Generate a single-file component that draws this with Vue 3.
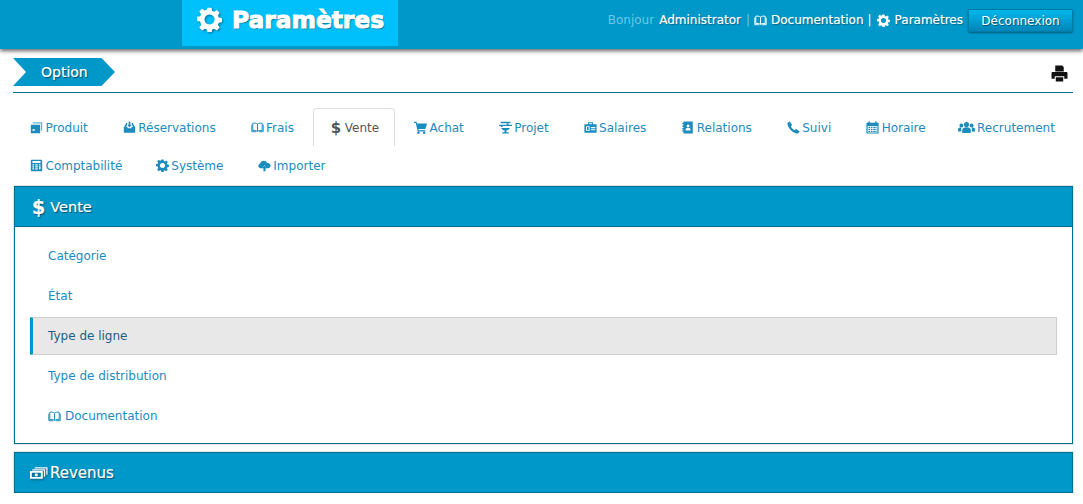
<script setup>
const paths = {
  box: '<path d="M4 1.500h11v9.500l-1.500 1.500V3H3z" opacity=".7"/><path d="M1 4.500h11.500V15H1zM3 10v2h3v-2z" fill-rule="evenodd"/>',
  resa: '<path fill-rule="evenodd" d="M4 2.500 1 8v6.500h14V8l-3-5.500H10.500L12 7.500h-1.500V9h-5V7.500H4L5.500 2.500zM7 .5h2v4h1.700L8 8 5.300 4.500H7z"/>',
  book: '<path fill="none" stroke="currentColor" stroke-width="1.200" d="M8 3.800C6.500 2.600 4 2.300 2.200 2.800v9c1.800-.5 4.300-.2 5.800 1 1.500-1.200 4-1.500 5.800-1v-9c-1.800-.5-4.300-.2-5.800 1zm0 0v9M1 4.500v8.700h5.500M15 4.500v8.700h-5.500"/>',
  cart: '<path d="M0 1h3.200l.5 2H16l-2 6.800H5.300l.4 1.500H14v1.500H4.500L2.200 2.500H0z"/><circle cx="5.500" cy="14.500" r="1.500"/><circle cx="12.500" cy="14.500" r="1.500"/>',
  projet: '<path d="M2 1h12v1.700H2zM0 4.500h9.500V3h2.200v1.500H16V6H4.500v1.500H2.300V6H0zM2.500 8.500h11L11 11.500H9.200v2.300H12V15.500H4v-1.700h2.800v-2.300H5z"/>',
  salary: '<path fill-rule="evenodd" d="M5 1.500h6V4h4.500v10.500H.5V4H5zm1.200 1.200V4h3.600V2.700zM2.500 6.500V12h4.500V6.500zm6 1V9H14V7.500zm0 2.500v1.500H14V10z"/><path d="M3.700 7.500h2v3.500h-2z"/>',
  contact: '<path fill-rule="evenodd" d="M3 .5h11.500v15H3zM1.500 2.500H3V4H1.500zm0 3H3v1.500H1.500zm0 3H3V10H1.500zm0 3H3V13H1.500zM8.700 4.300a1.800 1.800 0 1 0 .01 0zM5.700 11.800h6V10c0-1-1-1.500-3-1.500s-3 .5-3 1.500z"/>',
  phone: '<path d="M3.500.8 6 4.300c.3.400.2.800-.1 1.100L4.700 6.600c.8 1.900 2.600 3.800 4.700 4.700l1.200-1.200c.3-.3.700-.4 1.100-.1l3.500 2.500c.3.300.3.700.1 1l-1.600 1.500c-.5.500-1.200.6-2 .4C6.800 14.200 1.800 9.200.6 4.300c-.2-.8-.1-1.500.4-2L2.500.8c.3-.3.700-.3 1 0z"/>',
  cal: '<path fill-rule="evenodd" d="M3 .5h2V2h6V.5h2V2h2.500v13.500H.5V2H3zM2 6v8h12V6z"/><path d="M3 7h2v1.500H3zm3 0h2v1.500H6zm3 0h2v1.500H9zm2.500 0h1.500v1.500h-1.500zM3 9.500h2V11H3zm3 0h2V11H6zm3 0h2V11H9zm2.500 0h1.500V11h-1.500zM3 12h2v1.500H3zm3 0h2v1.500H6zm3 0h2v1.500H9zm2.500 0h1.500v1.500h-1.500z"/>',
  users: '<circle cx="10" cy="3.800" r="3"/><path d="M5 14v-3.500C5 8 7 7 10 7s5 1 5 3.500V14z"/><circle cx="4" cy="5" r="2.300"/><circle cx="16" cy="5" r="2.300"/><path d="M0 12v-2.500C0 8 1.500 7.300 3.500 7.300L4 12zM20 12v-2.500c0-1.500-1.500-2.200-3.500-2.200L16 12z"/>',
  calc: '<path fill-rule="evenodd" d="M2 1h12c.6 0 1 .4 1 1v12c0 .6-.4 1-1 1H2c-.6 0-1-.4-1-1V2c0-.6.400-1 1-1zm1 1.500V5h10V2.500zM3 6.500V8h2V6.500zm3.500 0V8h3V6.500zm4.500 0V8h2V6.500zM3 9v1.500h2V9zm3.500 0v1.500h3V9zM11 9v3.500h2V9zM3 11.500V13h2v-1.500zm3.500 0V13h3v-1.500z"/>',
  cloud: '<path d="M4 11.500C2 11.500.5 10.200.5 8.500c0-1.500 1-2.600 2.300-2.900C3 3.500 5 2 7.500 2.300c1.800.2 3.200 1.300 3.800 2.700 2.300-.3 4.200 1.300 4.200 3.400 0 1.700-1.500 3.100-3.400 3.100h-1.600L8 7.500 5.500 11.500z"/><path d="M8 8 4.800 11.500h1.900V15h2.600v-3.500h1.900z"/>',
  print: '<path fill-rule="evenodd" d="M4 .5h6.500L12 2v4H4zM1.500 6.500h13c.6 0 1 .4 1 1V13H12.500v-2.500h-9V13H.5V7.500c0-.6.4-1 1-1zM4.500 11.500h7v4h-7z"/>',
  money: '<path fill-rule="evenodd" d="M1 6.500h13.500v8H1zm2 1.800v4.400h9.500V8.300zM7.700 8.800a1.700 1.700 0 1 1 0 3.400 1.700 1.700 0 1 1 0-3.400z"/><path d="M3.500 4.700h13.500v7.800h-1.300V5.900h-12.200zM6 2.500h13.500v7.800h-1.300V3.700H6z"/>',
  gear: '<path fill-rule="evenodd" d="M6.700.5h2.600l.4 2 1.300.55 1.700-1.150 1.850 1.850-1.150 1.700.55 1.300 2 .4v2.600l-2 .4-.55 1.300 1.150 1.700-1.850 1.850-1.700-1.150-1.300.55-.4 2H6.700l-.4-2-1.300-.55-1.700 1.150-1.850-1.850 1.150-1.700L2.050 9.300l-2-.4V6.300l2-.4.55-1.300-1.150-1.700L3.300 1.050 5 2.200l1.300-.55zM8 4.800a3.200 3.200 0 1 0 .01 0z"/>',
}

const tabs = [
  { label: 'Produit', icon: 'box' },
  { label: 'Réservations', icon: 'resa' },
  { label: 'Frais', icon: 'book' },
  { label: 'Vente', glyph: '$', active: true },
  { label: 'Achat', icon: 'cart' },
  { label: 'Projet', icon: 'projet' },
  { label: 'Salaires', icon: 'salary' },
  { label: 'Relations', icon: 'contact' },
  { label: 'Suivi', icon: 'phone' },
  { label: 'Horaire', icon: 'cal' },
  { label: 'Recrutement', icon: 'users', wide: true },
  { label: 'Comptabilité', icon: 'calc' },
  { label: 'Système', icon: 'gear' },
  { label: 'Importer', icon: 'cloud' },
]
const items = [
  { label: 'Catégorie' },
  { label: 'État' },
  { label: 'Type de ligne', active: true },
  { label: 'Type de distribution' },
  { label: 'Documentation', icon: 'book' },
]
</script>

<template>
  <div class="page">
    <header class="top">
      <div class="logo">
        <svg class="logo-gear" viewBox="0 0 16 16" v-html="paths.gear"></svg>
        <span>Paramètres</span>
      </div>
      <nav class="userbar">
        <span class="hello">Bonjour</span>
        <b>Administrator</b>
        <span class="sep first">|</span>
        <svg class="mini" viewBox="0 0 16 16" v-html="paths.book"></svg>
        <b>Documentation</b>
        <span class="sep strong">|</span>
        <svg class="mini gear" viewBox="0 0 16 16" v-html="paths.gear"></svg>
        <b>Paramètres</b>
        <button class="logout">Déconnexion</button>
      </nav>
    </header>

    <main class="content">
      <div class="crumb-row">
        <div class="crumb">Option</div>
        <svg class="printer" viewBox="0 0 16 16" v-html="paths.print"></svg>
      </div>

      <ul class="tabs">
        <li v-for="t in tabs" :key="t.label" class="tab" :class="{ on: t.active, wide: t.wide }">
          <span v-if="t.glyph" class="glyph">{{ t.glyph }}</span>
          <svg v-else class="ico" :viewBox="t.wide ? '0 0 20 16' : '0 0 16 16'" v-html="paths[t.icon]"></svg>
          {{ t.label }}
        </li>
      </ul>

      <section class="panel">
        <h2 class="head"><span class="head-glyph">$</span>Vente</h2>
        <ul class="list">
          <li v-for="i in items" :key="i.label" class="row" :class="{ on: i.active }">
            <svg v-if="i.icon" class="ico" viewBox="0 0 16 16" v-html="paths[i.icon]"></svg>
            {{ i.label }}
          </li>
        </ul>
      </section>

      <section class="panel second">
        <h2 class="head"><svg class="head-ico" viewBox="0 0 20 16" v-html="paths.money"></svg>Revenus</h2>
      </section>
    </main>
  </div>
</template>

<style>
html, body { margin: 0; background: #fff; overflow: hidden; }
</style>

<style scoped>
.page { font-family: "DejaVu Sans", Verdana, sans-serif; font-size: 12px; color: #1c8bbd; }
ul { list-style: none; margin: 0; padding: 0; }
.top {
  height: 49px; background: #0097c9; box-shadow: 0 2px 4px rgba(0, 0, 0, .6);
  display: flex; align-items: flex-start; position: relative; padding: 0 10px 0 182px;
}
.logo {
  width: 216px; height: 46px; background: #00c0fb; box-sizing: border-box; padding: 0 0 7px 15px;
  display: flex; align-items: center; gap: 10px; color: #fff; font-weight: 700; font-size: 23.500px;
  text-shadow: 1px 1px 1px rgba(0, 0, 0, .5); -webkit-text-stroke: 1px #fff; letter-spacing: -.1px;
}
.logo-gear { width: 25px; height: 25px; fill: #fff; filter: drop-shadow(1px 1px 1px rgba(0, 0, 0, .4)); }
.userbar { margin-left: auto; display: flex; align-items: center; height: 22px; margin-top: 9px; color: #fff; white-space: nowrap; }
.userbar b { font-weight: 400; -webkit-text-stroke: .2px #fff; text-shadow: 1px 1px 1px rgba(0, 0, 0, .35); }
.hello { color: #6ec8e6; margin-right: 5px; }
.sep { color: #6ec8e6; margin: 0 5px; }
.sep.first { margin-right: 4px; }
.sep.strong { color: #fff; margin-left: 4px; }
.mini { width: 13px; height: 13px; fill: #fff; margin-right: 4px; }
.mini.gear { margin-right: 5px; }
.logout {
  width: 105px; height: 23px; margin: 1px 0 0 5px; font: inherit; color: #fff; padding: 0;
  background: linear-gradient(#00b7ec, #0086b8); border: 1px solid #007aa6; border-radius: 2px;
  box-shadow: 0 1px 2px rgba(0, 0, 0, .4); text-shadow: 1px 1px 1px rgba(0, 0, 0, .45);
}
.content { margin: 0 10px 0 13px; }
.crumb-row { display: flex; align-items: center; justify-content: space-between; padding: 9px 5px 6px 0; border-bottom: 1px solid #00698e; }
.crumb {
  width: 102px; height: 28px; box-sizing: border-box; padding-left: 28px; background: #0097c9; color: #fff;
  line-height: 28px; font-size: 14px; text-shadow: 1px 1px 1px rgba(0, 0, 0, .5); -webkit-text-stroke: .2px #fff;
  clip-path: polygon(0 0, 88.500px 0, 100% 50%, 88.500px 100%, 0 100%, 13px 50%);
}
.printer { width: 17px; height: 17px; fill: #111; margin-top: 2px; }
.tabs { display: flex; flex-wrap: wrap; margin: 15px -4px 2px 1px; }
.tab {
  height: 38px; box-sizing: border-box; padding: 0 15px; margin: 0 2.400px 0 0; display: flex; align-items: center; gap: 2.500px;
  white-space: nowrap; border: 1px solid transparent; border-width: 1px 1px 0; border-radius: 4px 4px 0 0;
}
.tab:nth-child(12) { margin-right: 1.500px; }
.tab:nth-child(-n + 10) { margin-right: 2.900px; }
.tab.on { color: #555; border-color: #ddd; }
.ico { width: 13px; height: 13px; fill: currentColor; flex: none; }
.tab.wide .ico { width: 17px; height: 14px; margin-left: -3px; }
.glyph { font-weight: 700; font-size: 15px; margin: 0 1px 0 2px; }
.panel { border: 1px solid #006f94; box-shadow: 0 0 0 1px #e6e6e6; margin-left: 1px; background: #fff; }
.second { margin-top: 8px; }
.head {
  margin: 0; height: 39px; background: #0097c9; color: #fff; font-size: 15px; font-weight: 400;
  display: flex; align-items: center; padding-left: 17px; text-shadow: 1px 1px 1px rgba(0, 0, 0, .5); -webkit-text-stroke: .2px #fff;
}
.panel:not(.second) .head { border-bottom: 1px solid #006f94; font-size: 14.500px; }
.head-glyph { font-weight: 700; font-size: 19px; margin-right: 5px; }
.head-ico { width: 19px; height: 17px; fill: #fff; margin-right: 2px; margin-left: -3px; filter: drop-shadow(1px 1px 1px rgba(0, 0, 0, .4)); }
.list { padding: 10px 15px 8px 15px; }
.row {
  height: 38px; box-sizing: border-box; border: 1px solid transparent; border-left-width: 3px; padding-left: 15px;
  display: flex; align-items: center; gap: 4px; margin-bottom: 2px;
}
.row:last-child { margin-bottom: 0; }
.row.on { background: #e8e8e8; border-color: #cfcfcf; border-left-color: #0097c9; color: #1c5f80; }
</style>
